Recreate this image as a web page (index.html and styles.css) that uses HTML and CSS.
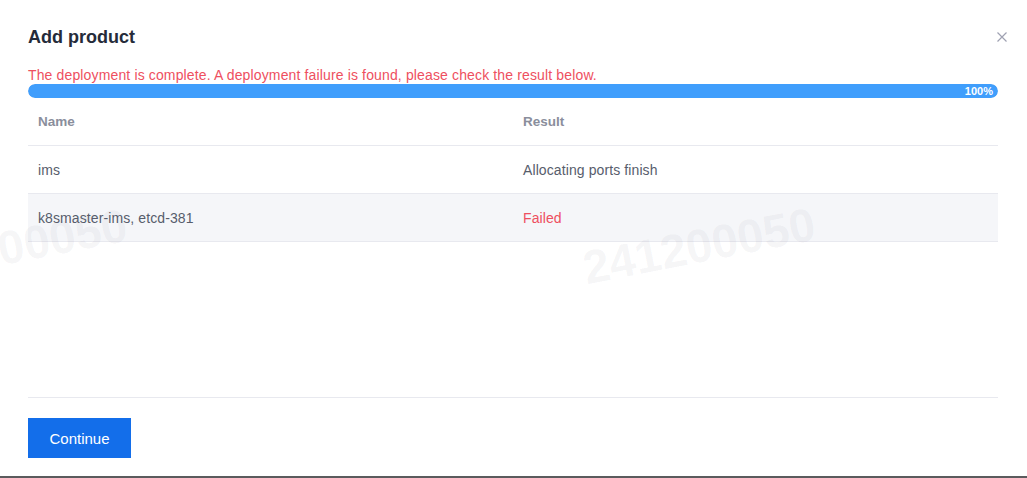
FILE: index.html
```html
<!DOCTYPE html>
<html lang="en">
<head>
<meta charset="utf-8">
<title>Add product</title>
<link rel="stylesheet" href="styles.css">
</head>
<body>
<div class="dialog">
  <div class="header">
    <h1 class="title">Add product</h1>
    <button class="close" aria-label="Close">
      <svg width="16" height="16" viewBox="0 0 16 16"><path d="M3.5 3.5 L12.5 12.5 M12.5 3.5 L3.5 12.5" stroke="#9fa1b2" stroke-width="1.2" fill="none"/></svg>
    </button>
  </div>
  <p class="error">The deployment is complete. A deployment failure is found, please check the result below.</p>
  <div class="progress"><div class="progress-fill" style="width:100%"><span class="progress-text">100%</span></div></div>
  <div class="table">
    <div class="row head"><div class="cell">Name</div><div class="cell">Result</div></div>
    <div class="row"><div class="cell">ims</div><div class="cell">Allocating ports finish</div></div>
    <div class="row alt"><div class="cell">k8smaster-ims, etcd-381</div><div class="cell failed">Failed</div></div>
  </div>
  <div class="spacer"></div>
  <div class="footer">
    <button class="primary">Continue</button>
  </div>
  <div class="watermark wm-left" aria-hidden="true">241200050</div>
  <div class="watermark wm-right" aria-hidden="true">241200050</div>
</div>
</body>
</html>
```

FILE: styles.css
```css
* { box-sizing: border-box; }
html, body { margin: 0; padding: 0; }
body {
  width: 1027px;
  height: 478px;
  overflow: hidden;
  background: #ffffff;
  font-family: "Liberation Sans", Arial, sans-serif;
}
.dialog {
  position: relative;
  height: 478px;
  padding: 25px 29px 18px 28px;
  display: flex;
  flex-direction: column;
  border-bottom: 2px solid #5b5b5d;
  overflow: hidden;
}
.watermark {
  position: absolute;
  z-index: 2;
  font-size: 47px;
  font-weight: bold;
  color: rgba(120, 120, 140, 0.07);
  transform: rotate(-11deg);
  transform-origin: left bottom;
  pointer-events: none;
  white-space: nowrap;
  line-height: 46px;
}
.wm-right { left: 588px; top: 245px; }
.wm-left { left: -100px; top: 246px; }
.header {
  display: flex;
  justify-content: space-between;
  align-items: center;
  height: 24px;
  margin-right: -12px;
}
.title {
  margin: 0;
  font-size: 18px;
  font-weight: bold;
  color: #252b3a;
  line-height: 24px;
}
.close {
  border: none;
  background: none;
  padding: 0;
  width: 16px;
  height: 16px;
  display: flex;
  cursor: pointer;
}
.error {
  margin: 18px 0 0 0;
  font-size: 14px;
  letter-spacing: 0.14px;
  line-height: 17px;
  color: #ee4f60;
}
.progress {
  height: 14px;
  border-radius: 7px;
  background: #e8ebf2;
  overflow: hidden;
}
.progress-fill {
  height: 100%;
  background: #409efc;
  border-radius: 7px;
  display: flex;
  justify-content: flex-end;
  align-items: center;
  padding-right: 5px;
}
.progress-text {
  color: #ffffff;
  font-size: 11px;
  font-weight: bold;
  line-height: 14px;
}
.row {
  display: grid;
  grid-template-columns: 485px 1fr;
  height: 48px;
  border-bottom: 1px solid #e8e9ef;
  align-items: center;
}
.row.alt { background: #f5f6f9; }
.cell {
  padding: 0 10px;
  font-size: 14px;
  letter-spacing: 0.1px;
  color: #575d6c;
}
.head .cell {
  font-weight: bold;
  color: #8a8e9c;
  font-size: 13.5px;
  letter-spacing: 0;
}
.cell.failed { color: #ee4f60; }
.spacer { flex: 1; }
.footer {
  border-top: 1px solid #e8e9ef;
  padding-top: 20px;
}
.primary {
  width: 103px;
  height: 40px;
  border: none;
  background: #136eea;
  color: #ffffff;
  font-family: "Liberation Sans", Arial, sans-serif;
  font-size: 15px;
  padding: 0;
  cursor: pointer;
}
```
